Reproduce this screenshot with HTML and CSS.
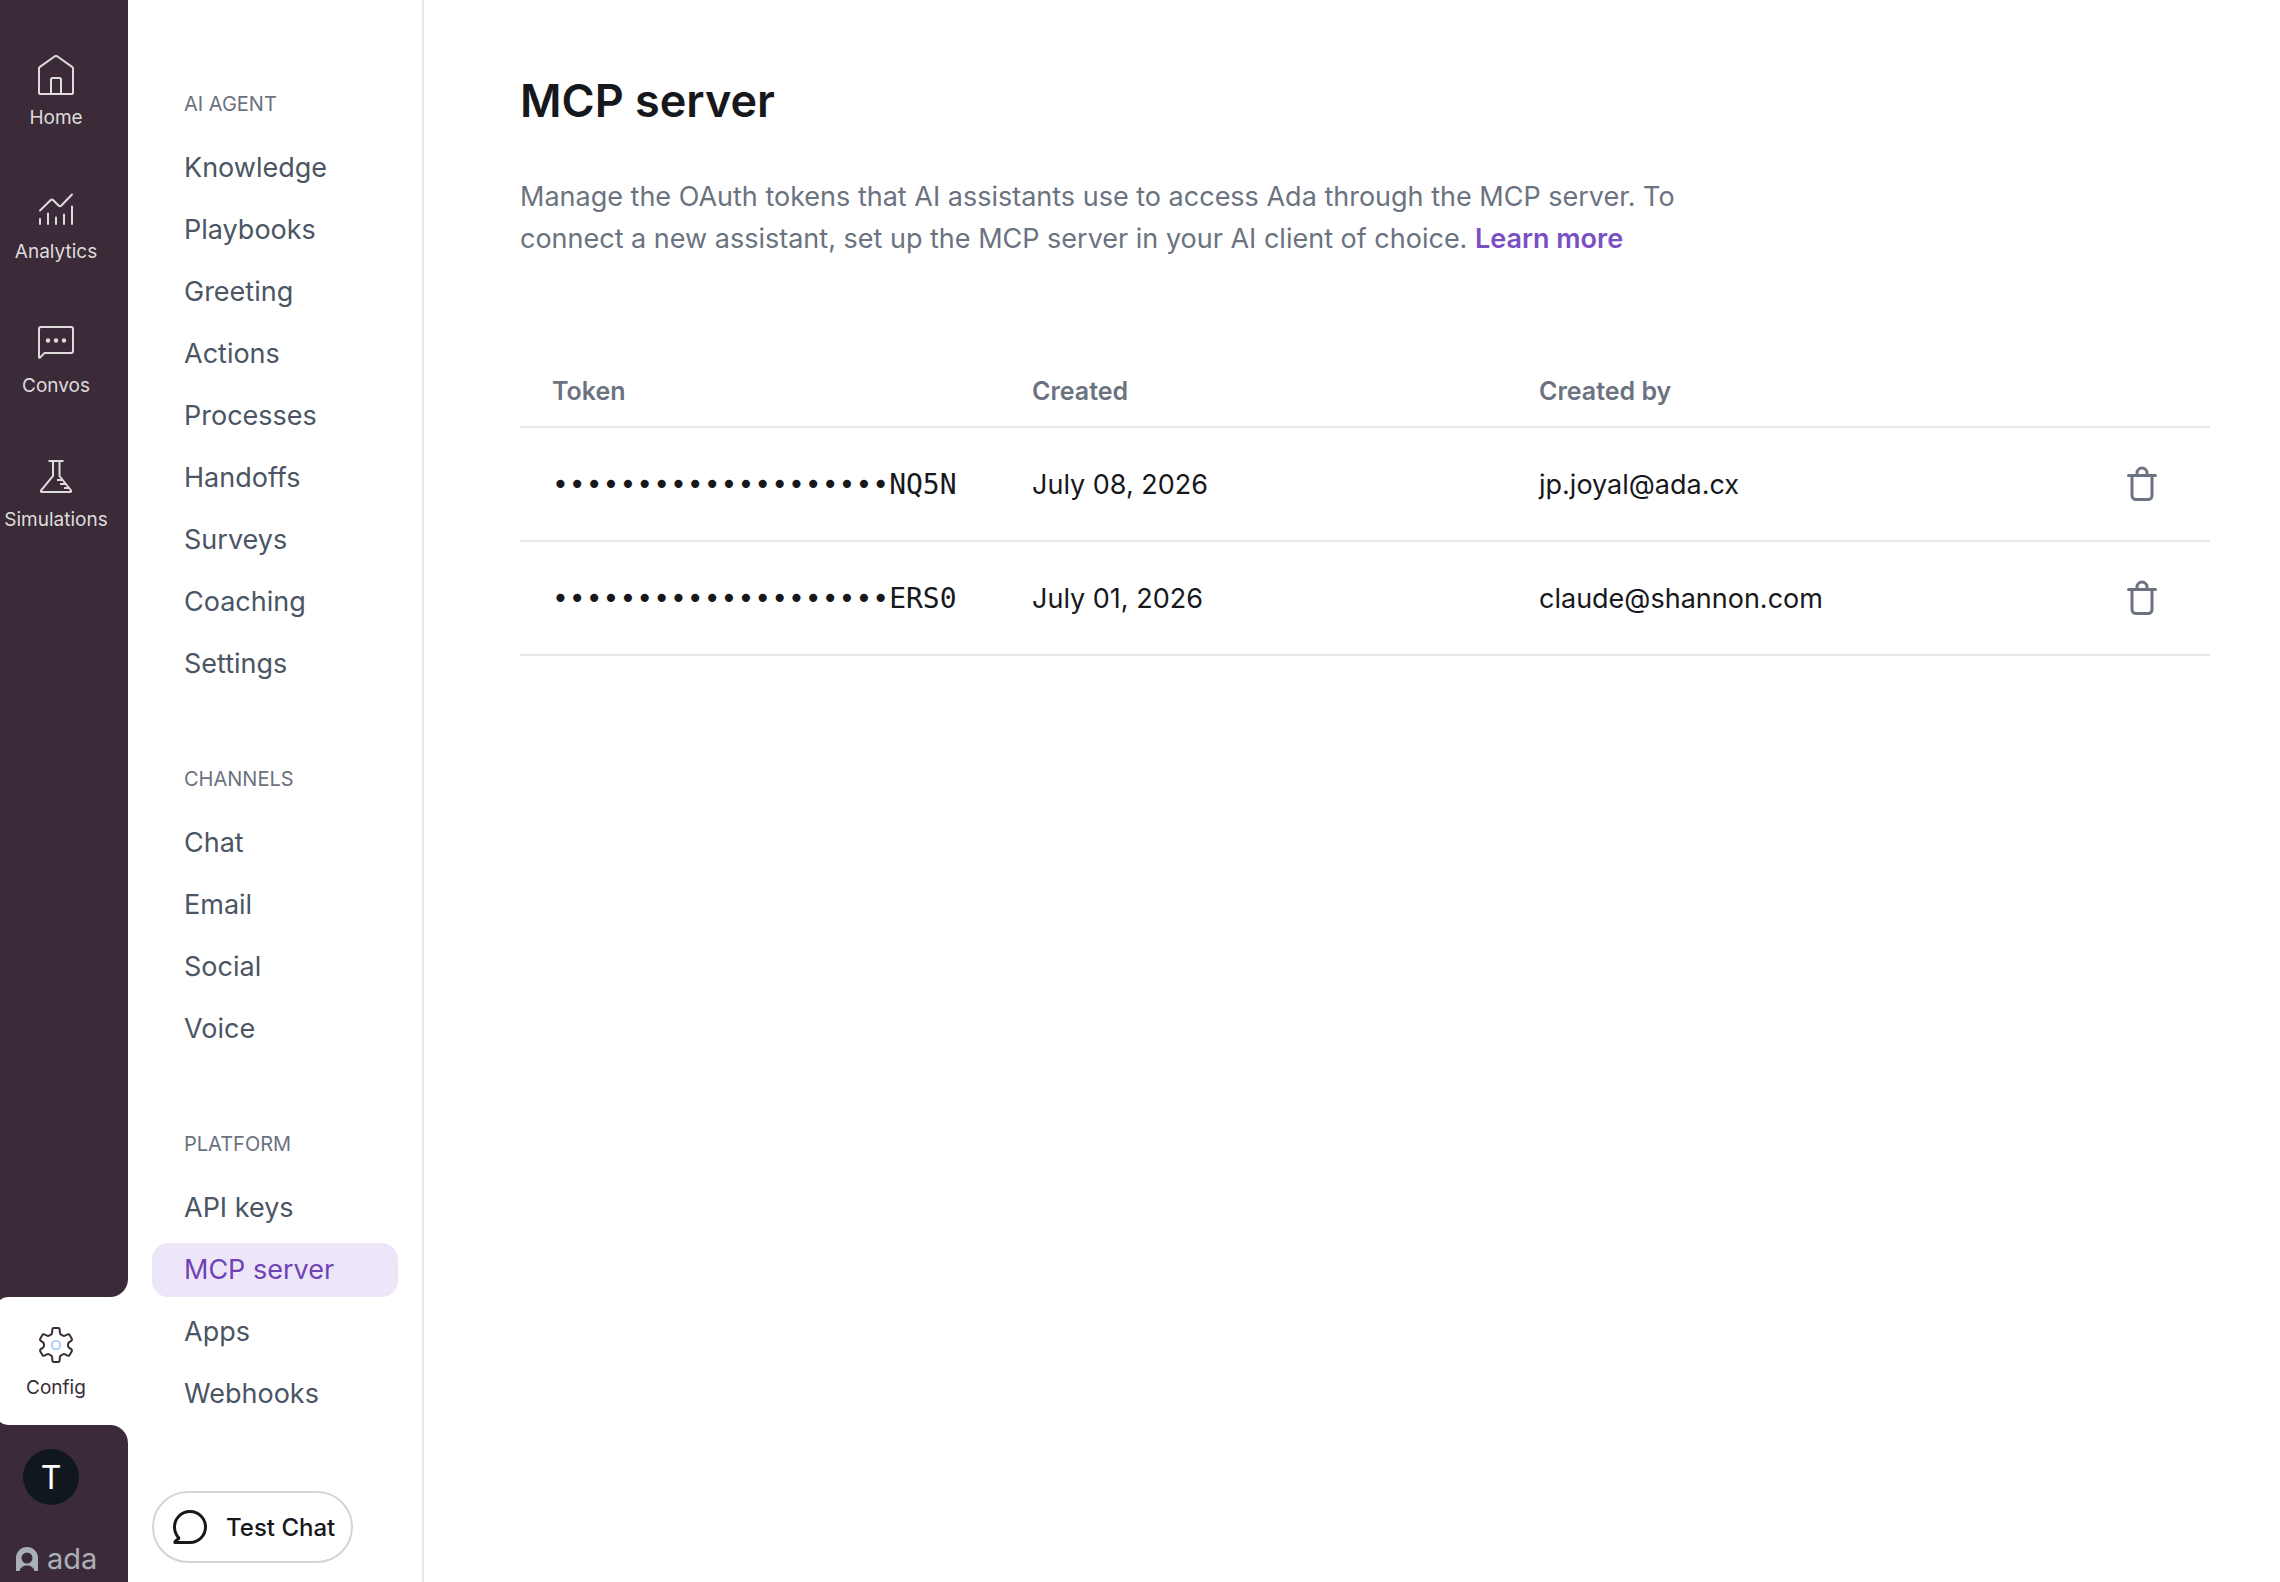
FILE: index.html
```html
<!DOCTYPE html>
<html lang="en">
<head>
<meta charset="utf-8">
<title>MCP server</title>
<link rel="stylesheet" href="styles.css">
</head>
<body>
<div class="app">
  <nav class="rail" aria-label="Main">
    <div class="rail-top">
      <a class="rail-item" href="#home">
        <svg class="rail-icon" viewBox="0 0 40 40"><path d="M3 13.500V38a1 1 0 0 0 1 1H36a1 1 0 0 0 1-1V13.500a2 2 0 0 0-.9-1.600L21.500 1.500a2.600 2.600 0 0 0-3 0L3.900 11.900A2 2 0 0 0 3 13.500ZM15 39V24.500a1.500 1.500 0 0 1 1.500-1.500h7a1.500 1.500 0 0 1 1.500 1.500V39"/></svg>
        <span>Home</span>
      </a>
      <a class="rail-item" href="#analytics">
        <svg class="rail-icon" viewBox="0 0 40 40"><path d="M4 21.500 14.500 11.300a2 2 0 0 1 2.800 0l5.300 5.200a2 2 0 0 0 2.800 0L36 5.500M4 30v5M12 24.500V35M20 28.500V35M28 25.500V35M36 17.500V35" stroke-linecap="round"/></svg>
        <span>Analytics</span>
      </a>
      <a class="rail-item" href="#convos">
        <svg class="rail-icon" viewBox="0 0 40 40"><path d="M3 34V6a2 2 0 0 1 2-2H35a2 2 0 0 1 2 2V28a2 2 0 0 1-2 2H8.500L4.200 34.400Q3 35.500 3 34Z"/><g class="dots"><circle cx="12" cy="17.500" r="2.200"/><circle cx="20" cy="17.500" r="2.200"/><circle cx="28" cy="17.500" r="2.200"/></g></svg>
        <span>Convos</span>
      </a>
      <a class="rail-item" href="#simulations">
        <svg class="rail-icon" viewBox="0 0 40 40"><path d="M12.500 4H27.500M17 4V19L5 33.500Q4.500 35 6 35H34Q35.500 35 35 33.500L23.500 19V4M21 23H26M24 27H29.500M28 31H33"/></svg>
        <span>Simulations</span>
      </a>
    </div>
    <a class="rail-item rail-current" href="#config" aria-current="page">
      <svg class="rail-icon" viewBox="0 0 40 40"><path d="M17.800 3h4.400q1.300 0 1.400 1.200l.3 3.600q.1 1.200 1.200 1.800l1.800 1q1 .6 2.100.1l2.600-1.300q1.300-.6 2 .5l2.200 3.800q.6 1.100-.4 1.900l-2.400 1.800q-1 .8-1 2v1.200q0 1.200 1 2l2.400 1.800q1 .8.400 1.900l-2.200 3.800q-.7 1.100-2 .5l-2.600-1.300q-1.100-.5-2.100.1l-1.800 1q-1.100.6-1.200 1.800l-.3 3.600q-.1 1.200-1.400 1.200h-4.400q-1.300 0-1.400-1.200l-.3-3.600q-.1-1.200-1.200-1.800l-1.800-1q-1-.6-2.100-.1l-2.600 1.300q-1.300.6-2-.5l-2.200-3.800q-.6-1.100.4-1.900l2.400-1.800q1-.8 1-2v-1.200q0-1.200-1-2l-2.400-1.800q-1-.8-.4-1.900l2.200-3.800q.7-1.100 2-.5l2.600 1.300q1.100.5 2.100-.1l1.800-1q1.100-.6 1.200-1.800l.3-3.600q.1-1.200 1.400-1.200Z"/><circle class="gear-hub" cx="20" cy="20" r="4.200"/></svg>
      <span>Config</span>
    </a>
    <div class="rail-bottom">
      <button class="avatar" type="button" aria-label="Account">T</button>
      <div class="brand">
        <svg class="brand-mark" viewBox="0 0 22 24"><path fill-rule="evenodd" d="M0 24V11a11 11 0 0 1 22 0V24H18.500Q17 18.500 11 18.500T3.500 24ZM11 5.500a5.500 5.500 0 1 0 0 11 5.500 5.500 0 0 0 0-11Z"/></svg>
        <span>ada</span>
      </div>
    </div>
  </nav>

  <aside class="sidebar">
    <nav class="menu" aria-label="Config">
      <section class="group">
        <h2>AI AGENT</h2>
        <ul>
          <li><a href="#knowledge">Knowledge</a></li>
          <li><a href="#playbooks">Playbooks</a></li>
          <li><a href="#greeting">Greeting</a></li>
          <li><a href="#actions">Actions</a></li>
          <li><a href="#processes">Processes</a></li>
          <li><a href="#handoffs">Handoffs</a></li>
          <li><a href="#surveys">Surveys</a></li>
          <li><a href="#coaching">Coaching</a></li>
          <li><a href="#settings">Settings</a></li>
        </ul>
      </section>
      <section class="group">
        <h2>CHANNELS</h2>
        <ul>
          <li><a href="#chat">Chat</a></li>
          <li><a href="#email">Email</a></li>
          <li><a href="#social">Social</a></li>
          <li><a href="#voice">Voice</a></li>
        </ul>
      </section>
      <section class="group">
        <h2>PLATFORM</h2>
        <ul>
          <li><a href="#api-keys">API keys</a></li>
          <li><a class="current" href="#mcp-server" aria-current="page">MCP server</a></li>
          <li><a href="#apps">Apps</a></li>
          <li><a href="#webhooks">Webhooks</a></li>
        </ul>
      </section>
    </nav>
    <button class="test-chat" type="button">
      <svg viewBox="0 0 36 36"><path d="M6.800 29Q2.500 24.300 2.500 18A15.500 15.500 0 1 1 18 33.500H3.500Q2 33.500 3.500 32L6 30Q7 29.500 6.800 29Z"/></svg>
      Test Chat
    </button>
  </aside>

  <main class="content">
    <h1>MCP server</h1>
    <p class="intro">Manage the OAuth tokens that AI assistants use to access Ada through the MCP server. To connect a new assistant, set up the MCP server in your AI client of choice. <a href="#learn-more">Learn more</a></p>
    <table class="tokens">
      <thead>
        <tr><th class="col-token" scope="col">Token</th><th class="col-created" scope="col">Created</th><th class="col-by" scope="col">Created by</th><th class="col-action"></th></tr>
      </thead>
      <tbody>
        <tr>
          <td class="secret">••••••••••••••••••••NQ5N</td><td>July 08, 2026</td><td>jp.joyal@ada.cx</td>
          <td class="action"><button class="delete" type="button" aria-label="Delete token"><svg viewBox="0 0 36 36"><path d="M4.500 9.500H31.500M13 9.500V7a5 5 0 0 1 10 0V9.500M8 9.500V29.500a4 4 0 0 0 4 4H24a4 4 0 0 0 4-4V9.500"/></svg></button></td>
        </tr>
        <tr>
          <td class="secret">••••••••••••••••••••ERS0</td><td>July 01, 2026</td><td>claude@shannon.com</td>
          <td class="action"><button class="delete" type="button" aria-label="Delete token"><svg viewBox="0 0 36 36"><path d="M4.500 9.500H31.500M13 9.500V7a5 5 0 0 1 10 0V9.500M8 9.500V29.500a4 4 0 0 0 4 4H24a4 4 0 0 0 4-4V9.500"/></svg></button></td>
        </tr>
      </tbody>
    </table>
  </main>
</div>
</body>
</html>
```
FILE: styles.css
```css
* {
  box-sizing: border-box;
}

body {
  margin: 0;
  background: #fff;
  color: #17181c;
  font-family: Inter, "Liberation Sans", sans-serif;
  font-size: 27px;
}

a {
  color: inherit;
  text-decoration: none;
}

button {
  font: inherit;
  cursor: pointer;
}

svg {
  display: block;
  fill: none;
  stroke: currentColor;
}

.app {
  display: flex;
  min-height: 100vh;
}

/* Icon rail */
.rail {
  display: flex;
  flex-direction: column;
  flex: none;
  width: 128px;
  overflow: hidden;
  background: linear-gradient(to right, #3b2b38 16px, #fff 16px);
}

.rail-top,
.rail-bottom {
  background: #3b2b38;
}

.rail-top {
  flex: 1;
  padding-top: 40px;
  border-bottom-right-radius: 18px;
}

.rail-item {
  display: flex;
  flex-direction: column;
  align-items: center;
  gap: 12px;
  width: 112px;
  height: 134px;
  padding-top: 15px;
  color: #dedbdc;
  font-size: 19px;
  line-height: 22px;
}

.rail-icon {
  width: 40px;
  height: 40px;
  stroke-width: 2;
}

.dots {
  fill: currentColor;
  stroke: none;
}

.rail-current {
  width: 132px;
  height: 128px;
  margin-left: -4px;
  padding: 28px 12px 0 0;
  border-radius: 12px 0 0 12px;
  background: #fff;
  color: #3b2b38;
}

.gear-hub {
  stroke: #b0d0fb;
}

.rail-bottom {
  display: flex;
  flex-direction: column;
  gap: 39px;
  padding: 24px 16px 8px;
  border-top-right-radius: 18px;
}

.avatar {
  width: 56px;
  height: 56px;
  margin-left: 7px;
  padding: 0;
  border: 0;
  border-radius: 50%;
  background: #10181e;
  color: #fff;
  font-size: 32px;
}

.brand {
  display: flex;
  align-items: flex-end;
  gap: 9px;
  color: #a9b0ba;
  font-size: 29px;
  line-height: 30px;
}

.brand-mark {
  width: 22px;
  height: 24px;
  margin-bottom: 3px;
  fill: currentColor;
  stroke: none;
}

/* Section menu */
.sidebar {
  display: flex;
  flex-direction: column;
  justify-content: space-between;
  align-items: stretch;
  flex: none;
  width: 296px;
  padding: 89px 24px 19px;
  border-right: 2px solid #e5e7eb;
}

.menu {
  display: flex;
  flex-direction: column;
  gap: 73px;
}

.group h2 {
  margin: 0 0 22px;
  padding-left: 32px;
  color: #6b7280;
  font-size: 20px;
  font-weight: 400;
  line-height: 30px;
}

.group ul {
  display: flex;
  flex-direction: column;
  gap: 8px;
  margin: 0;
  padding: 0;
  list-style: none;
}

.group a {
  display: block;
  padding: 0 32px;
  border-radius: 16px;
  color: #4b5563;
  font-size: 27px;
  line-height: 54px;
}

.group .current {
  background: #ede6f9;
  color: #6f42b5;
}

.test-chat {
  display: flex;
  align-items: center;
  align-self: flex-start;
  gap: 18px;
  height: 72px;
  padding: 0 16px 0 18px;
  border: 2px solid #d1d5db;
  border-radius: 36px;
  background: #fff;
  color: #17181c;
  font-size: 24px;
  font-weight: 500;
  white-space: nowrap;
}

.test-chat svg {
  width: 36px;
  height: 36px;
  stroke-width: 3;
}

/* Page */
.content {
  flex: 1;
  min-width: 0;
  padding: 71px 70px 72px 96px;
}

h1 {
  margin: 0;
  font-size: 45px;
  font-weight: 600;
  line-height: 60px;
}

.intro {
  max-width: 1200px;
  margin: 45px 0 0;
  color: #6b7280;
  line-height: 42px;
}

.intro a {
  color: #7b4fc4;
  font-weight: 600;
}

.tokens {
  width: 100%;
  margin-top: 96px;
  border-collapse: collapse;
  table-layout: fixed;
}

.tokens th,
.tokens td {
  padding: 0 32px;
  border-bottom: 2px solid #e5e7eb;
  text-align: left;
}

.tokens th {
  height: 71px;
  color: #6b7280;
  font-size: 25px;
  font-weight: 600;
}

.tokens td {
  height: 114px;
}

.tokens .col-token {
  width: 480px;
}

.tokens .col-created {
  width: 30%;
}

.tokens .col-action {
  width: 136px;
}

.tokens .secret {
  padding-right: 0;
  font-family: "DejaVu Sans Mono", monospace;
  font-size: 28px;
}

.tokens .action {
  padding: 0 50px;
}

.delete {
  display: block;
  padding: 0;
  border: 0;
  background: none;
  color: #6b7280;
}

.delete svg {
  width: 36px;
  height: 36px;
  stroke-width: 3;
  stroke-linecap: round;
}
```
